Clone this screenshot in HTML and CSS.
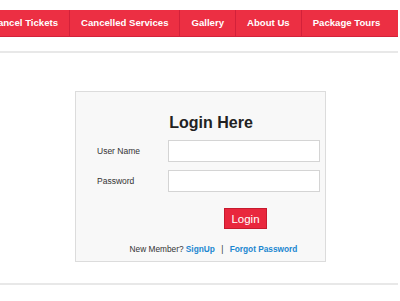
FILE: index.html
```html
<!DOCTYPE html>
<html lang="en">
<head>
    <meta charset="UTF-8">
    <meta name="viewport" content="width=device-width, initial-scale=1.0">
    <title>Login</title>
    <link rel="stylesheet" href="styles.css">
</head>
<body>
    <div class="page">
        <div class="menu">
            <ul class="menu-list">
                <li><a href="#">Cancel Tickets</a></li>
                <li><a href="#">Cancelled Services</a></li>
                <li><a href="#">Gallery</a></li>
                <li><a href="#">About Us</a></li>
                <li><a href="#">Package Tours</a></li>
            </ul>
        </div>

        <div class="rule"></div>

        <div class="login-box">
            <h2 class="login-title">Login Here</h2>
            <div class="login-form">
                <label class="login-label">User Name</label>
                <input class="login-input" type="text">
                <label class="login-label">Password</label>
                <input class="login-input" type="password">
                <div class="login-action">
                    <button class="login-btn">Login</button>
                </div>
            </div>
            <p class="login-foot">
                New Member? <a href="#">SignUp</a> <span class="sep">|</span> <a href="#">Forgot Password</a>
            </p>
        </div>

        <div class="rule rule-bottom"></div>
    </div>
</body>
</html>
```

FILE: styles.css
```css
body {
    margin: 0;
    font-family: "Liberation Sans", Arial, sans-serif;
    background: #fff;
}
.page {
    width: 398px;
    padding-top: 10px;
    overflow: hidden;
}

/* top menu */
.menu {
    background: #ec2f43;
    border-bottom: 1px solid #d3213a;
    height: 26px;
    overflow: hidden;
}
.menu-list {
    display: flex;
    margin: 0 0 0 -20px;
    padding: 0;
    list-style: none;
}
.menu-list li {
    border-right: 1px solid #d3213a;
}
.menu-list li:last-child {
    border-right: none;
}
.menu-list a {
    display: block;
    padding: 0 11px;
    line-height: 26px;
    font-size: 9.6px;
    font-weight: bold;
    color: #fff;
    text-decoration: none;
    white-space: nowrap;
}

.rule {
    height: 2px;
    background: #e8e8e8;
    margin-top: 14px;
}
.rule-bottom {
    margin-top: 21px;
}

/* login box */
.login-box {
    width: 251px;
    margin: 38px 0 0 75px;
    padding: 21px 5px 6px 21px;
    box-sizing: border-box;
    background: #f8f8f8;
    border: 1px solid #dcdcdc;
}
.login-title {
    margin: 0;
    text-align: center;
    font-size: 16px;
    line-height: 20px;
    color: #222;
    padding-left: 5px;
}
.login-form {
    display: grid;
    grid-template-columns: 71px 1fr;
    row-gap: 8px;
    align-items: center;
    margin-top: 7px;
}
.login-label {
    font-size: 8.5px;
    color: #333;
}
.login-input {
    height: 22px;
    box-sizing: border-box;
    border: 1px solid #d4d4d4;
    background: #fff;
    margin: 0;
    width: 100%;
}
.login-action {
    grid-column: 2;
    text-align: center;
    margin-top: 8px;
}
.login-btn {
    height: 21px;
    width: 43px;
    padding: 0;
    background: #e9273d;
    border: 1px solid #c61a2e;
    color: #fff;
    font-family: "Liberation Sans", Arial, sans-serif;
    font-size: 11.5px;
    margin-left: 3px;
}
.login-foot {
    margin: 14px 0 0;
    text-align: center;
    font-size: 8.3px;
    line-height: 12px;
    color: #333;
    padding-left: 10px;
}
.login-foot a {
    color: #1b87d0;
    font-weight: bold;
    text-decoration: none;
}
.login-foot .sep {
    margin: 0 4px;
}
```
